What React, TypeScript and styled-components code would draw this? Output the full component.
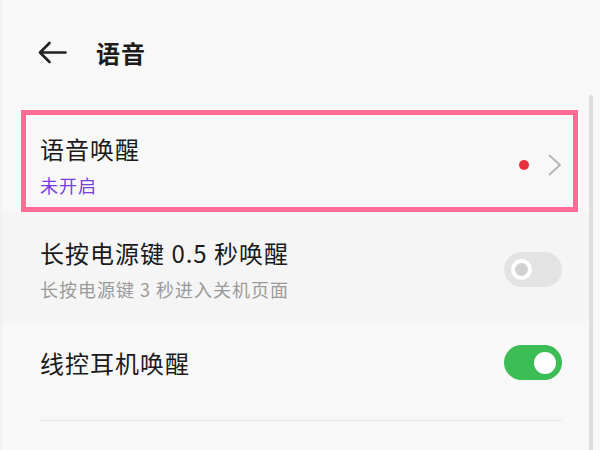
import React from "react";
import styled, { createGlobalStyle } from "styled-components";

const Global = createGlobalStyle`
  html, body { margin: 0; padding: 0; background: #f8f8f8; }
  body { font-family: "Noto Sans CJK SC", "Noto Sans", sans-serif; }
`;

const Frame = styled.div`
  display: flex;
  width: 600px;
  height: 450px;
  overflow: hidden;
  background: #f8f8f8;
`;

const Screen = styled.div`
  width: 587px;
  border-left: 2px solid #f1f1f1;
  display: flex;
  flex-direction: column;
`;

const ScrollTrack = styled.div`
  width: 11px;
  padding-top: 95px;
  box-sizing: border-box;
  display: flex;
`;

const ScrollThumb = styled.div`
  width: 4px;
  background: #dedede;
  border-radius: 2px 2px 0 0;
`;

const Header = styled.div`
  height: 104px;
  display: flex;
  align-items: center;
  padding-left: 35px;
  gap: 29px;
`;

const Title = styled.div`
  font-size: 24px;
  font-weight: 600;
  letter-spacing: 1px;
  color: #1c1c1c;
  line-height: 32px;
  padding-top: 2px;
`;

const List = styled.div`
  padding-top: 6px;
  display: flex;
  flex-direction: column;
`;

const Highlight = styled.div`
  margin-left: 19px;
  width: 557px;
  box-sizing: border-box;
  border: 5px solid #ff6d94;
`;

const Row = styled.div<{ $shade?: boolean; $pt: number; $pb: number; $pl: number; $pr: number }>`
  display: flex;
  align-items: center;
  justify-content: space-between;
  padding: ${(p) => p.$pt}px ${(p) => p.$pr}px ${(p) => p.$pb}px ${(p) => p.$pl}px;
  background: ${(p) => (p.$shade ? "#f5f5f5" : "transparent")};
`;

const TextCol = styled.div`
  display: flex;
  flex-direction: column;
  gap: 8px;
`;

const ItemTitle = styled.div`
  font-size: 24px;
  line-height: 32px;
  letter-spacing: 1px;
  color: #1a1a1a;
`;

const ItemSub = styled.div<{ $accent?: boolean }>`
  font-size: 18px;
  line-height: 24px;
  letter-spacing: 1px;
  color: ${(p) => (p.$accent ? "#7a3ee0" : "#9a9a9a")};
`;

const Trail = styled.div`
  display: flex;
  align-items: center;
  gap: 19px;
`;

const Dot = styled.div`
  width: 10px;
  height: 10px;
  border-radius: 50%;
  background: #e8303f;
`;

const Toggle = styled.div<{ $on?: boolean }>`
  width: 58px;
  height: 35px;
  border-radius: 18px;
  background: ${(p) => (p.$on ? "#3dbd56" : "#e3e3e3")};
  display: flex;
  align-items: center;
  justify-content: ${(p) => (p.$on ? "flex-end" : "flex-start")};
  padding: 0 ${(p) => (p.$on ? 6 : 7)}px;
  box-sizing: border-box;
`;

const KnobOff = styled.div`
  width: 21px;
  height: 21px;
  box-sizing: border-box;
  border-radius: 50%;
  border: 4px solid #ffffff;
  background: #d2d2d2;
`;

const KnobOn = styled.div`
  width: 22px;
  height: 22px;
  border-radius: 50%;
  background: #ffffff;
`;

const Divider = styled.div`
  margin: 0 27px 0 38px;
  height: 1px;
  background: #e6e6e6;
`;

const BackArrow = () => (
  <svg width="30" height="23" viewBox="0 0 30 23" fill="none">
    <path d="M28.5 11.5H3.5M12.5 2L3 11.5L12.5 21" stroke="#222" strokeWidth="2.6" strokeLinecap="round" strokeLinejoin="round" />
  </svg>
);

const Chevron = () => (
  <svg width="14" height="22" viewBox="0 0 14 22" fill="none">
    <path d="M1.5 1.5L12 11L1.5 20.5" stroke="#b4b4b4" strokeWidth="1.8" strokeLinecap="round" strokeLinejoin="round" />
  </svg>
);

export default function App() {
  return (
    <>
      <Global />
      <Frame>
        <Screen>
          <Header>
            <BackArrow />
            <Title>语音</Title>
          </Header>
          <List>
            <Highlight>
              <Row $pt={18} $pb={10} $pl={14} $pr={11}>
                <TextCol>
                  <ItemTitle>语音唤醒</ItemTitle>
                  <ItemSub $accent>未开启</ItemSub>
                </TextCol>
                <Trail>
                  <Dot />
                  <Chevron />
                </Trail>
              </Row>
            </Highlight>
            <Row $shade $pt={25} $pb={21} $pl={38} $pr={27}>
              <TextCol>
                <ItemTitle>长按电源键 0.5 秒唤醒</ItemTitle>
                <ItemSub>长按电源键 3 秒进入关机页面</ItemSub>
              </TextCol>
              <Toggle>
                <KnobOff />
              </Toggle>
            </Row>
            <Row $pt={23} $pb={40} $pl={38} $pr={27}>
              <ItemTitle>线控耳机唤醒</ItemTitle>
              <Toggle $on>
                <KnobOn />
              </Toggle>
            </Row>
            <Divider />
          </List>
        </Screen>
        <ScrollTrack>
          <ScrollThumb />
        </ScrollTrack>
      </Frame>
    </>
  );
}
